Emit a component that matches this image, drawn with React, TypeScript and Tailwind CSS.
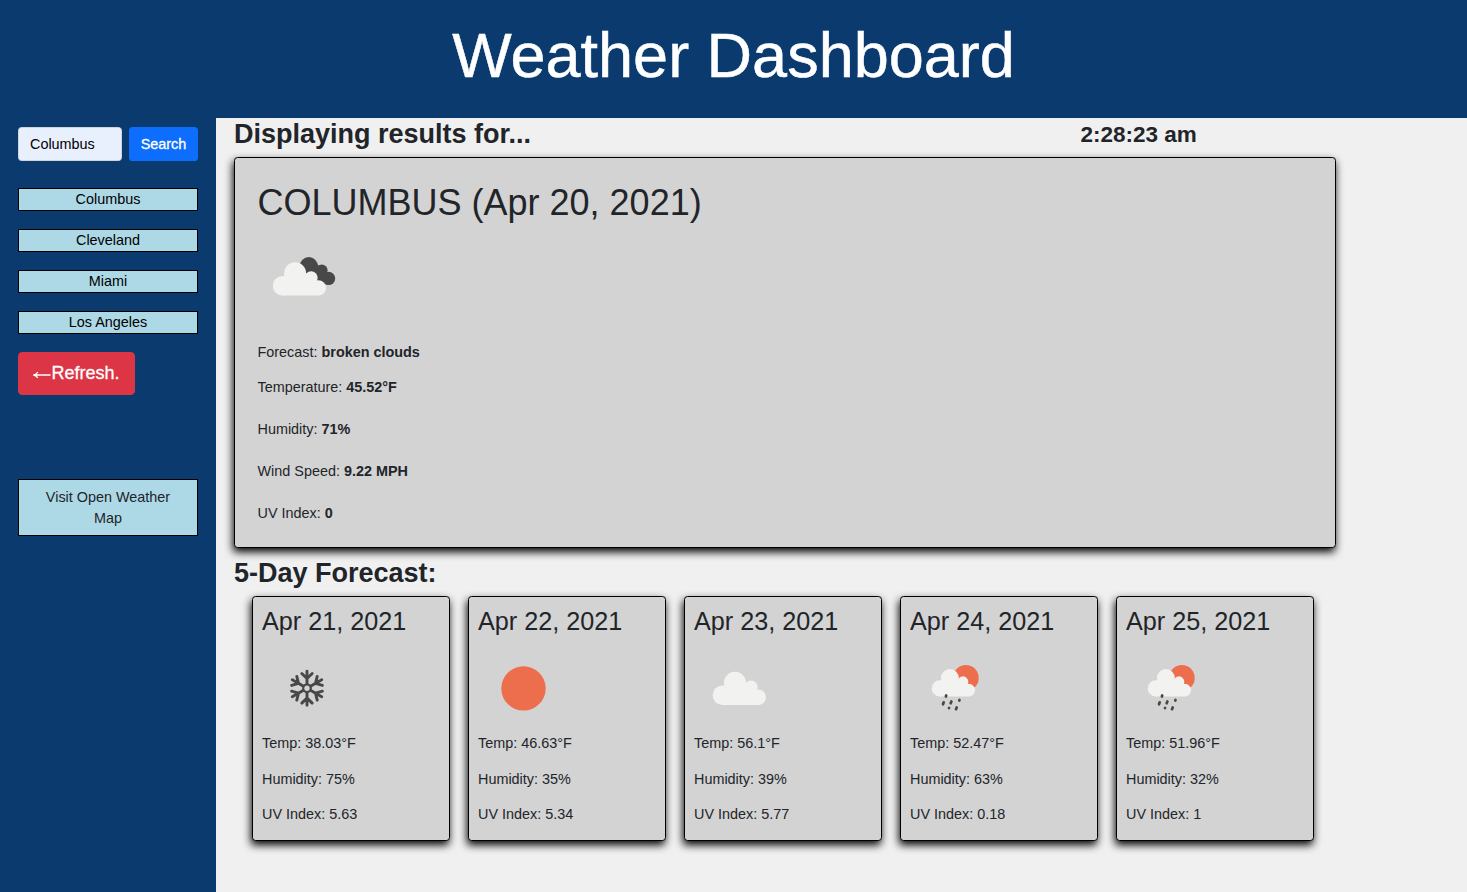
import React from "react";

const cities = ["Columbus", "Cleveland", "Miami", "Los Angeles"];

function Cloud({ transform }: { transform: string }) {
  return (
    <g transform={transform} fill="#f2f2f0">
      <circle cx="9.8" cy="23.5" r="9.8" />
      <circle cx="22.3" cy="11" r="11" />
      <circle cx="38.3" cy="15.5" r="6.6" />
      <circle cx="45.6" cy="25.6" r="7.7" />
      <path d="M9.8 14H38L45.6 24V33.3H9.8Z" />
    </g>
  );
}

function BrokenClouds() {
  return (
    <svg className="block h-[90px] w-[90px]" viewBox="0 0 90 90">
      <g fill="#484848">
        <circle cx="50.8" cy="33" r="9" />
        <circle cx="63.8" cy="37.3" r="5.8" />
        <circle cx="70.5" cy="45.4" r="6.7" />
        <path d="M46 40L59 31L69 40L68 51L60 48Z" />
      </g>
      <Cloud transform="translate(14.8 29.3)" />
    </svg>
  );
}

function Snow() {
  return (
    <svg className="block h-[90px] w-[90px]" viewBox="-45 -45.3 90 90">
      <g stroke="#484848" strokeWidth="2.9" strokeLinecap="round" fill="none">
        <circle r="3.8" strokeWidth="2.2" />
        {[0, 60, 120, 180, 240, 300].map((a) => (
          <g key={a} transform={`rotate(${a})`}>
            <path d="M0 -4.5V-17M0 -9.8L-5.2 -14.8M0 -9.8L5.2 -14.8" />
          </g>
        ))}
      </g>
    </svg>
  );
}

function Sun() {
  return (
    <svg className="block h-[90px] w-[90px]" viewBox="0 0 90 90">
      <circle cx="45.5" cy="45.4" r="22.2" fill="#ec6e4c" />
    </svg>
  );
}

function ScatteredCloud() {
  return (
    <svg className="block h-[90px] w-[90px]" viewBox="0 0 90 90">
      <Cloud transform="translate(18.7 28.7)" />
    </svg>
  );
}

function SunRain() {
  return (
    <svg className="block h-[90px] w-[90px]" viewBox="0 0 90 90">
      <circle cx="55.9" cy="34.9" r="12.8" fill="#ec6e4c" />
      <Cloud transform="translate(21.7 26) scale(0.815 0.825)" />
      <g stroke="#484848" strokeWidth="2.7" strokeLinecap="round">
        <path d="M36.2 52.5L35.9 53.5M33.7 59.3L33 61.3M41.4 58.4L40.7 60.3M49.5 57L49.3 57.5M39.1 64.9L39 65.1M46.7 64.4L46 66.2" />
      </g>
    </svg>
  );
}

const days = [
  { date: "Apr 21, 2021", icon: <Snow />, temp: "38.03", humidity: "75", uv: "5.63" },
  { date: "Apr 22, 2021", icon: <Sun />, temp: "46.63", humidity: "35", uv: "5.34" },
  { date: "Apr 23, 2021", icon: <ScatteredCloud />, temp: "56.1", humidity: "39", uv: "5.77" },
  { date: "Apr 24, 2021", icon: <SunRain />, temp: "52.47", humidity: "63", uv: "0.18" },
  { date: "Apr 25, 2021", icon: <SunRain />, temp: "51.96", humidity: "32", uv: "1" },
];

export default function App() {
  return (
    <div className="flex h-[892px] flex-col overflow-hidden bg-[#f0f0f0] font-['Liberation_Sans',Arial,sans-serif] text-[14.4px] leading-[21.6px] text-[#212529]">
      <header className="h-[118px] shrink-0 bg-[#0a3a6e] pt-[17px] text-center">
        <h1 className="text-[63px] leading-[76px] text-white [-webkit-text-stroke:0.5px_white]">Weather Dashboard</h1>
      </header>
      <div className="flex min-h-0 flex-1">
        <aside className="w-[216px] shrink-0 bg-[#0a3a6e] px-[18px] pt-[9px]">
          <form className="flex justify-between" onSubmit={(e) => e.preventDefault()}>
            <input
              className="h-[34px] w-[104px] rounded-[3.6px] border border-[#ced4da] bg-[#e8f0fe] px-[11px] text-black outline-none"
              defaultValue="Columbus"
            />
            <button className="h-[34px] w-[69px] rounded-[3.6px] bg-[#0d6efd] pt-px text-white [-webkit-text-stroke:0.3px_white]">
              Search
            </button>
          </form>
          <div className="mt-[27px] flex flex-col gap-[18px]">
            {cities.map((c) => (
              <button key={c} className="h-[23px] border border-black bg-[#add8e6] leading-[21px] text-black">
                {c}
              </button>
            ))}
          </div>
          <button className="mt-[18px] flex h-[43px] w-[117px] items-center justify-center rounded-[4.3px] bg-[#dc3545] text-[18px] text-white [-webkit-text-stroke:0.3px_white]">
            <svg className="h-[18px] w-[18px]" viewBox="0 0 18 18" fill="none" stroke="white" strokeWidth="1.3">
              <path d="M17.5 10H1M4.8 7Q3.5 9.3 1 10Q3.5 10.7 4.8 13" />
            </svg>
            Refresh.
          </button>
          <a className="mt-[84px] flex h-[57px] items-center justify-center border border-black bg-[#add8e6] px-[18px] text-center leading-[21px]">
            Visit Open Weather Map
          </a>
        </aside>
        <main className="flex-1 pl-[18px]">
          <div className="flex h-[39px]">
            <h3 className="w-[846.5px] text-[27px] leading-[32px] font-bold">Displaying results for...</h3>
            <h4 className="text-[22.5px] leading-[33px] font-bold">2:28:23 am</h4>
          </div>
          <section className="h-[391px] w-[1102px] rounded-[3.6px] border border-black bg-[#d3d3d3] px-[22.5px] pt-[23px] shadow-[-1px_4px_9px_0_#000]">
            <h2 className="text-[36px] leading-[43px]">COLUMBUS (Apr 20, 2021)</h2>
            <div className="mt-[9px] h-[90px]"><BrokenClouds /></div>
            <div className="mt-[19px] leading-[21px]">
              <p>Forecast: <b>broken clouds</b></p>
              <p className="mt-[14px]">Temperature: <b>45.52°F</b></p>
              <p className="mt-[21px]">Humidity: <b>71%</b></p>
              <p className="mt-[21px]">Wind Speed: <b>9.22 MPH</b></p>
              <p className="mt-[21px]">UV Index: <b>0</b></p>
            </div>
          </section>
          <h3 className="mt-[9px] text-[27px] leading-[32px] font-bold">5-Day Forecast:</h3>
          <div className="mt-[7px] flex gap-[18px] pl-[18px]">
            {days.map((d) => (
              <article
                key={d.date}
                className="h-[245px] w-[198px] rounded-[3.6px] border border-black bg-[#d3d3d3] px-[9px] pt-[9px] shadow-[-1px_4px_9px_0_#000]"
              >
                <h4 className="text-[25.2px] leading-[30px]">{d.date}</h4>
                <div className="mt-[7px] h-[90px]">{d.icon}</div>
                <p>Temp: {d.temp}°F</p>
                <p className="mt-[14px]">Humidity: {d.humidity}%</p>
                <p className="mt-[14px]">UV Index: {d.uv}</p>
              </article>
            ))}
          </div>
        </main>
      </div>
    </div>
  );
}
